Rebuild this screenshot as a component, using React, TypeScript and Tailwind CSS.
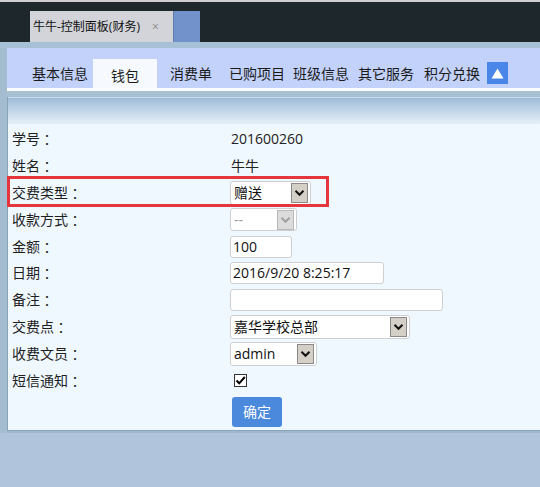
import React from "react";

const Chevron = ({ disabled }: { disabled?: boolean }) => (
  <div
    className={`ml-auto mr-[2px] flex h-[20px] w-[17px] items-center justify-center border ${
      disabled ? "border-[#b8b8b8] bg-[#dcdcdc]" : "border-[#8a8a8a] bg-[#d4d0c8]"
    }`}
  >
    <svg width="11" height="8" viewBox="0 0 11 8">
      <path
        d="M1.5 1.8 L5.5 5.8 L9.5 1.8"
        fill="none"
        stroke={disabled ? "#a0a0a0" : "#111"}
        strokeWidth="2"
      />
    </svg>
  </div>
);

const Select = ({
  text,
  w,
  h = "h-[24px]",
  disabled,
}: {
  text: string;
  w: string;
  h?: string;
  disabled?: boolean;
}) => (
  <div
    className={`flex ${w} ${h} items-center rounded-[3px] border border-[#cfcfcf] bg-white pl-[3px] text-[14px] leading-none ${
      disabled ? "text-[#9a9a9a]" : "text-[#111]"
    }`}
  >
    <span>{text}</span>
    <Chevron disabled={disabled} />
  </div>
);

const Input = ({ text, w }: { text?: string; w: string }) => (
  <div
    className={`flex ${w} h-[22px] items-center rounded-[3px] border border-[#cfcfcf] bg-white pl-[2px] text-[14px] leading-none text-[#111]`}
  >
    {text}
  </div>
);

const Row = ({
  label,
  children,
  highlight,
}: {
  label: string;
  children: React.ReactNode;
  highlight?: boolean;
}) => (
  <div className="relative flex h-[26.8px] items-center">
    <div className="flex w-[222px] items-center pl-[4px] text-[14px] leading-none text-[#1e1e1e]">
      <span>{label}</span>
      <span style={{ fontFamily: '"Noto Sans CJK TC", sans-serif' }}>：</span>
    </div>
    <div className="flex items-center">{children}</div>
    {highlight && (
      <div className="pointer-events-none absolute left-[-1px] top-[-4px] h-[31px] w-[322px] border-[3px] border-[#e4363c]" />
    )}
  </div>
);

export default function App() {
  const tabs = [
    { t: "消费单", ml: "ml-[13px]" },
    { t: "已购项目", ml: "ml-[17px]" },
    { t: "班级信息", ml: "ml-[8px]" },
    { t: "其它服务", ml: "ml-[9px]" },
    { t: "积分兑换", ml: "ml-[10px]" },
  ];
  return (
    <div
      className="flex h-[487px] w-[540px] flex-col overflow-hidden bg-[#b0c4dc]"
      style={{ fontFamily: '"Open Sans", "Noto Sans CJK SC", sans-serif' }}
    >
      {/* top window strip */}
      <div className="h-[2px] bg-[#cfcfcf]" />
      <div className="flex h-[40px] items-end bg-[#1d272c] pl-[30px]">
        <div className="flex h-[31px] w-[143px] items-center bg-[#d3d4d9] pl-[3px] text-[12px] leading-none text-[#111]">
          <span>牛牛-控制面板(财务)</span>
          <span className="ml-[12px] text-[12px] text-[#888]">×</span>
        </div>
        <div className="h-[31px] w-[27px] border-l border-[#5d7bb0] bg-[#7292cc]" />
      </div>
      <div className="h-[6px] bg-[#a7c0d6]" />

      {/* main */}
      <div className="flex">
        <div className="w-[7px] self-stretch bg-[#a3bccf]" />
        <div className="flex flex-1 flex-col">
          {/* tab bar */}
          <div className="flex h-[40px] items-end bg-[#c3d2fa] text-[14px] leading-none text-[#1a1a1a]">
            <div className="ml-[25px] flex h-[29px] items-center">基本信息</div>
            <div className="ml-[5px] flex h-[29px] w-[64px] items-center justify-center bg-[#f6fafe] pt-[4px]">
              钱包
            </div>
            {tabs.map((x) => (
              <div key={x.t} className={`${x.ml} flex h-[29px] items-center`}>
                {x.t}
              </div>
            ))}
            <div className="mb-[4px] ml-[7px] flex h-[22px] w-[21px] items-center justify-center bg-[#4a86e8]">
              <svg width="13" height="11" viewBox="0 0 13 11">
                <path d="M6.5 0.5 L12.5 10.5 L0.5 10.5 Z" fill="#fff" />
              </svg>
            </div>
          </div>
          <div className="h-[3px] bg-[#f8fcff]" />
          <div className="h-[6px] bg-[#a9bfd2]" />

          {/* panel */}
          <div className="flex h-[334px] flex-col border-b border-l border-[#86a5b9] bg-[#f0f8ff]">
            <div className="h-[27px] border-t border-[#c9dbea] bg-gradient-to-b from-[#9fbdd7] to-[#e6eff8]" />
            <div className="flex flex-col pt-[2px]">
              <Row label="学号">
                <span className="pl-[1px] text-[14px] leading-none text-[#222]">201600260</span>
              </Row>
              <Row label="姓名">
                <span className="pl-[1px] text-[14px] leading-none text-[#222]">牛牛</span>
              </Row>
              <Row label="交费类型" highlight>
                <Select text="赠送" w="w-[81px]" />
              </Row>
              <Row label="收款方式">
                <Select text="--" w="w-[67px]" h="h-[23px]" disabled />
              </Row>
              <Row label="金额">
                <Input text="100" w="w-[62px]" />
              </Row>
              <Row label="日期">
                <Input text="2016/9/20 8:25:17" w="w-[154px]" />
              </Row>
              <Row label="备注">
                <Input w="w-[213px]" />
              </Row>
              <Row label="交费点">
                <Select text="嘉华学校总部" w="w-[180px]" />
              </Row>
              <Row label="收费文员">
                <Select text="admin" w="w-[87px]" />
              </Row>
              <Row label="短信通知">
                <div className="ml-[4px] flex h-[13px] w-[13px] items-center justify-center border border-[#333] bg-white">
                  <svg width="11" height="11" viewBox="0 0 11 11">
                    <path d="M1.5 5.5 L4.2 8.3 L9.8 2" fill="none" stroke="#000" strokeWidth="2" />
                  </svg>
                </div>
              </Row>
              <div className="mt-[3px] pl-[224px]">
                <div className="flex h-[30px] w-[50px] items-center justify-center rounded-[3px] bg-[#4a89dc] text-[14px] leading-none text-white">
                  确定
                </div>
              </div>
            </div>
          </div>
          <div className="h-[2px] bg-[#9fb6cc]" />
        </div>
      </div>
    </div>
  );
}
